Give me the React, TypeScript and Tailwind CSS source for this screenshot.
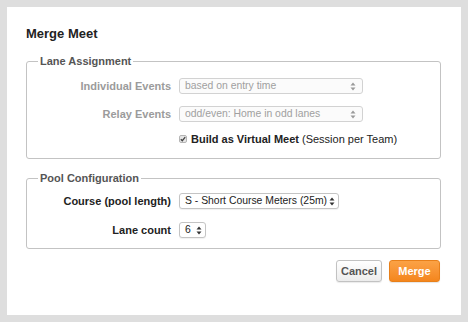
import React from 'react';

function Arrows({ dark }: { dark?: boolean }) {
    const c = dark ? '#333' : '#9a9a9a';
    return (
        <svg width="6" height="9" viewBox="0 0 6 9" className="shrink-0">
            <path d="M3 0.5 L5.5 3.5 L0.5 3.5 Z" fill={c} />
            <path d="M3 8.5 L5.5 5.5 L0.5 5.5 Z" fill={c} />
        </svg>
    );
}

interface SelectBoxProps {
    value: string;
    width: string;
    disabled?: boolean;
}

function SelectBox({ value, width, disabled }: SelectBoxProps) {
    return (
        <div
            className={`flex h-[16px] items-center justify-between gap-[2px] rounded-[3px] border pl-[5px] text-[10.4px] ${width} ${
                disabled
                    ? 'border-[#d2d2d2] bg-[#fbfbfb] pr-[6px] text-[#a0a0a0]'
                    : 'border-[#c4c4c4] bg-white pr-[3px] text-[#222] shadow-[0_1px_1px_rgba(0,0,0,0.06)]'
            }`}
        >
            <span className="whitespace-nowrap leading-[14px]">{value}</span>
            <Arrows dark={!disabled} />
        </div>
    );
}

function Row({ label, disabled, children, className }: { label: string; disabled?: boolean; children: React.ReactNode; className?: string }) {
    return (
        <div className={`flex h-[16px] items-center gap-[8px] ${className ?? ''}`}>
            <label className={`w-[133px] text-right text-[11px] font-bold ${disabled ? 'text-[#9b9b9b]' : 'text-[#222]'}`}>
                {label}
            </label>
            {children}
        </div>
    );
}

export default function App() {
    return (
        <div className="h-[322px] w-[468px] bg-[#dedede] p-[7px] font-['Liberation_Sans',Arial,sans-serif]">
            <div className="h-[308px] bg-white pl-[19px] pr-[20px] pt-[19px]">
                <h2 className="text-[13px] font-bold leading-[16px] text-[#222]">Merge Meet</h2>

                {/* Lane assignment */}
                <fieldset className="mt-[12px] rounded-[3px] border border-[#c3c3c3] pb-[11px] pl-[11px]">
                    <legend className="px-[2px] text-[11px] font-bold leading-[14px] text-[#555]">Lane Assignment</legend>
                    <Row label="Individual Events" disabled className="mt-[10px]">
                        <SelectBox value="based on entry time" width="w-[184px]" disabled />
                    </Row>
                    <Row label="Relay Events" disabled className="mt-[12px]">
                        <SelectBox value="odd/even: Home in odd lanes" width="w-[184px]" disabled />
                    </Row>
                    <div className="mt-[9px] flex h-[16px] items-center pl-[141px] text-[11px] text-[#222]">
                        <svg width="8" height="8" viewBox="0 0 8 8" className="mr-[4px]">
                            <rect x="0.5" y="0.5" width="7" height="7" rx="1.5" fill="#e6e6e6" stroke="#b5b5b5" />
                            <path d="M1.8 4.2 L3.3 5.7 L6.2 2.2" fill="none" stroke="#444" strokeWidth="1.3" />
                        </svg>
                        <span className="font-bold">Build as Virtual Meet</span>
                        <span className="ml-[3px]">(Session per Team)</span>
                    </div>
                </fieldset>

                {/* Pool configuration */}
                <fieldset className="mt-[12px] rounded-[3px] border border-[#c3c3c3] pb-[10px] pl-[11px]">
                    <legend className="px-[2px] text-[11px] font-bold leading-[14px] text-[#555]">Pool Configuration</legend>
                    <Row label="Course (pool length)" className="mt-[8px]">
                        <SelectBox value="S - Short Course Meters (25m)" width="w-[160px]" />
                    </Row>
                    <Row label="Lane count" className="mt-[13px]">
                        <SelectBox value="6" width="w-[27px]" />
                    </Row>
                </fieldset>

                <div className="mr-[1px] mt-[11px] flex justify-end gap-[7px]">
                    <button className="h-[22px] w-[46px] rounded-[3px] border border-[#c2c2c2] bg-gradient-to-b from-white to-[#ececec] text-[11px] font-bold text-[#555] shadow-[0_1px_1px_rgba(0,0,0,0.08)]">
                        Cancel
                    </button>
                    <button className="h-[22px] w-[51px] rounded-[3px] border border-[#e8801a] bg-gradient-to-b from-[#fba245] to-[#f4861c] text-[11px] font-bold text-white shadow-[0_1px_1px_rgba(0,0,0,0.1)]">
                        Merge
                    </button>
                </div>
            </div>
        </div>
    );
}
